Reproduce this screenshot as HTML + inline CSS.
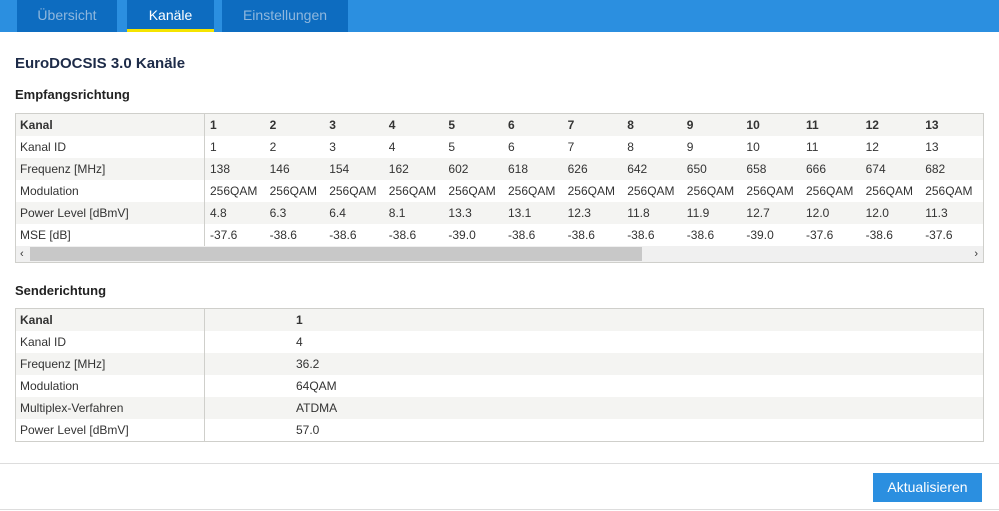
<!DOCTYPE html>
<html><head><meta charset="utf-8"><style>
body{margin:0;width:999px;height:511px;background:#fff;font-family:"Liberation Sans",sans-serif;color:#333;position:relative;overflow:hidden}
.bar{position:absolute;left:0;top:0;width:999px;height:32px;background:#2b8fe0}
.tab{position:absolute;top:0;height:32px;background:#0d6cc0;color:#8fb7dd;font-size:14px;text-align:center;line-height:30px}
.tab.act{color:#fff;border-bottom:3px solid #f5e400;height:29px}
h1{position:absolute;left:15px;top:55px;margin:0;font-size:15px;color:#1d2b48;font-weight:bold}
h2{position:absolute;left:15px;margin:0;font-size:13px;color:#222;font-weight:bold}
.t{position:absolute;left:15px;width:967px;border:1px solid #cfcfcb;font-size:12px;color:#333}
.r{height:22px;line-height:22px;position:relative;white-space:nowrap}
.r:nth-child(odd){background:#f4f4f2}
.r span{position:absolute;top:0}
.r .l{left:4px}
.div{position:absolute;top:0;bottom:0;left:188px;border-left:1px solid #cfcfcb}
b{font-weight:bold}
</style></head><body>
<div class="bar"></div>
<div class="tab" style="left:17px;width:100px">Übersicht</div>
<div class="tab act" style="left:127px;width:87px">Kanäle</div>
<div class="tab" style="left:222px;width:126px">Einstellungen</div>
<h1>EuroDOCSIS 3.0 Kanäle</h1>
<h2 style="top:87px">Empfangsrichtung</h2>
<div class="t" style="top:113px;height:148px;overflow:hidden" id="t1"></div>
<h2 style="top:283px">Senderichtung</h2>
<div class="t" style="top:308px;height:132px" id="t2"></div>
<div style="position:absolute;left:0;top:463px;width:999px;border-top:1px solid #ddd"></div>
<div style="position:absolute;left:873px;top:473px;width:109px;height:29px;background:#2b8fe0;color:#fff;font-size:14px;text-align:center;line-height:29px">Aktualisieren</div>
<div style="position:absolute;left:0;top:509px;width:999px;border-top:1px solid #ddd"></div>
<script>
var rows=[["Kanal","1 2 3 4 5 6 7 8 9 10 11 12 13"],["Kanal ID","1 2 3 4 5 6 7 8 9 10 11 12 13"],["Frequenz [MHz]","138 146 154 162 602 618 626 642 650 658 666 674 682"],["Modulation","256QAM 256QAM 256QAM 256QAM 256QAM 256QAM 256QAM 256QAM 256QAM 256QAM 256QAM 256QAM 256QAM"],["Power Level [dBmV]","4.8 6.3 6.4 8.1 13.3 13.1 12.3 11.8 11.9 12.7 12.0 12.0 11.3"],["MSE [dB]","-37.6 -38.6 -38.6 -38.6 -39.0 -38.6 -38.6 -38.6 -38.6 -39.0 -37.6 -38.6 -37.6"]];
var h='';rows.forEach(function(r,i){var v=r[1].split(' ');h+='<div class="r"><span class="l">'+(i?r[0]:'<b>'+r[0]+'</b>')+'</span>';v.forEach(function(x,j){h+='<span style="left:'+(194+j*59.6)+'px">'+(i?x:'<b>'+x+'</b>')+'</span>'});h+='</div>'});
h+='<div class="div" style="bottom:16px"></div><div style="position:absolute;left:0;top:132px;width:967px;height:16px;background:#f0f0f0"><div style="position:absolute;left:14px;top:1px;width:612px;height:14px;background:#c8c8c8"></div><span style="position:absolute;left:4px;top:0;font-size:11px;line-height:16px">&lsaquo;</span><span style="position:absolute;right:5px;top:0;font-size:11px;line-height:16px">&rsaquo;</span></div>';
document.getElementById('t1').innerHTML=h;
var r2=[["Kanal","1"],["Kanal ID","4"],["Frequenz [MHz]","36.2"],["Modulation","64QAM"],["Multiplex-Verfahren","ATDMA"],["Power Level [dBmV]","57.0"]];
h='';r2.forEach(function(r,i){h+='<div class="r"><span class="l">'+(i?r[0]:'<b>'+r[0]+'</b>')+'</span><span style="left:280px">'+(i?r[1]:'<b>'+r[1]+'</b>')+'</span></div>'});
h+='<div class="div"></div>';document.getElementById('t2').innerHTML=h;
</script>
</body></html>
